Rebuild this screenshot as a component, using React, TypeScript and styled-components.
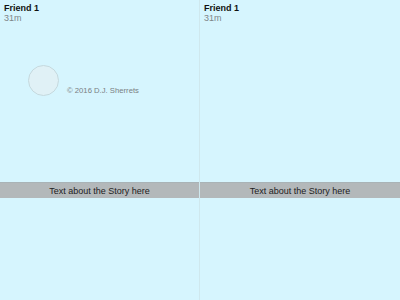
import React from "react";
import styled, { createGlobalStyle } from "styled-components";

const Global = createGlobalStyle`
  html, body { margin: 0; padding: 0; }
  body { width: 400px; height: 300px; overflow: hidden; background: #d6f5fe; font-family: "Liberation Sans", Arial, sans-serif; }
`;

const Page = styled.div`
  display: grid;
  grid-template-columns: 199px 1px 200px;
  width: 400px;
  height: 300px;
  background: #d6f5fe;
`;

const Divider = styled.div`
  background: #cfe8ee;
`;

const Panel = styled.div`
  display: flex;
  flex-direction: column;
  height: 300px;
`;

const Header = styled.div`
  padding: 3px 0 0 4px;
  height: 24px;
  box-sizing: border-box;
`;

const Name = styled.div`
  font-size: 9px;
  font-weight: bold;
  color: #111;
  line-height: 10px;
`;

const Time = styled.div`
  font-size: 9px;
  color: #808588;
  line-height: 10px;
`;

const Body = styled.div`
  height: 158px;
`;

const Credit = styled.div`
  display: flex;
  align-items: center;
  padding: 41px 0 0 28px;
`;

const Avatar = styled.div`
  width: 29px;
  height: 29px;
  border-radius: 50%;
  background: #e0f1f6;
  border: 1.5px solid #c5d9de;
`;

const Copy = styled.span`
  margin: 19px 0 0 8px;
  font-size: 7.7px;
  color: #7a7f82;
`;

const Caption = styled.div`
  height: 15px;
  background: #b3b8ba;
  border-top: 1px solid #a9b3b6;
  display: flex;
  align-items: center;
  justify-content: center;
  font-size: 9px;
  color: #222;
`;

function StoryPanel({ withCredit }: { withCredit?: boolean }) {
  return (
    <Panel>
      <Header>
        <Name>Friend 1</Name>
        <Time>31m</Time>
      </Header>
      <Body>
        {withCredit && (
          <Credit>
            <Avatar />
            <Copy>© 2016 D.J. Sherrets</Copy>
          </Credit>
        )}
      </Body>
      <Caption>Text about the Story here</Caption>
    </Panel>
  );
}

export default function App() {
  return (
    <>
      <Global />
      <Page>
        <StoryPanel withCredit />
        <Divider />
        <StoryPanel />
      </Page>
    </>
  );
}
